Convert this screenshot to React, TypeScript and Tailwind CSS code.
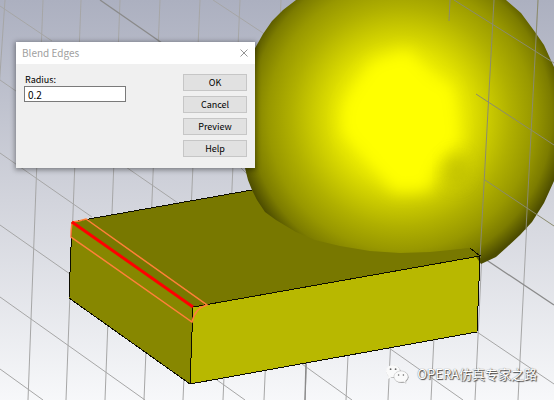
import { useState } from "react";

const verticalLines = [
  [5, -22],
  [43, 28],
  [81, 66],
  [120, 105],
  [160, 144],
  [200, 183],
  [240, 223],
  [281, 264],
  [322, 305],
  [364, 346],
  [407, 388],
  [450, 431],
  [494, 475],
  [538, 518],
];

const diagonalLines = [
  [0, 6, 52, 41],
  [0, 80, 178, 203],
  [0, 153, 92, 217],
  [0, 225, 70, 274],
  [0, 297, 145, 400],
  [0, 369, 43, 400],
  [213, 0, 266, 35],
  [230, 157, 250, 177],
  [217, 380, 245, 400],
  [302, 364, 352, 400],
  [389, 348, 463, 400],
  [477, 332, 554, 384],
];

// grid lines that run in front of the sphere
const frontLines = [
  [450, 0, 449, 21],
  [494, 0, 480, 258],
  [538, 0, 526, 230],
  [454, 0, 554, 63],
  [476, 94, 554, 145],
  [485, 180, 554, 226],
];

const spherePath =
  "M296 0 L283 10 L272 21 L263 34 L254 50 L246 75 L241 110 L242 150 L245 168 L248 180 L252 190 L257 200 L265 212 L276 220 L296 232 L315 240 L340 246 L370 251 L400 253 L430 252 L470 248 L481 264 L496 257 L506 248 L520 235 L532 222 L544 203 L554 181 L562 150 L562 100 L554 67 L544 45 L535 32 L521 13 L506 0 Z";

const Scene = () => (
  <svg
    className="absolute inset-0 h-full w-full"
    viewBox="0 0 554 400"
    preserveAspectRatio="xMidYMid slice"
    aria-hidden="true"
  >
    <defs>
      <radialGradient
        id="sphere"
        gradientUnits="userSpaceOnUse"
        cx="401"
        cy="117"
        r="166"
      >
        <stop offset="0" stopColor="#ffff00" />
        <stop offset="0.3" stopColor="#f2f200" />
        <stop offset="0.42" stopColor="#e0e000" />
        <stop offset="0.54" stopColor="#c8c800" />
        <stop offset="0.66" stopColor="#b0b000" />
        <stop offset="0.8" stopColor="#989800" />
        <stop offset="0.91" stopColor="#7c7c00" />
        <stop offset="1" stopColor="#4c4c00" />
      </radialGradient>
      <filter id="soft" x="-50%" y="-50%" width="200%" height="200%">
        <feGaussianBlur stdDeviation="8" />
      </filter>
      <clipPath id="sphereClip">
        <path d={spherePath} />
      </clipPath>
    </defs>

    <g stroke="#a6a6a6" strokeWidth="1">
      {verticalLines.map(([top, bottom]) => (
        <line key={top} x1={top} y1="0" x2={bottom} y2="400" />
      ))}
      {diagonalLines.map(([x1, y1, x2, y2]) => (
        <line key={`${x1}-${y1}`} x1={x1} y1={y1} x2={x2} y2={y2} />
      ))}
    </g>
    <g stroke="#8a8a8a" strokeWidth="1.3">
      <line x1="100" y1="0" x2="162" y2="43" />
      <line x1="479" y1="255" x2="554" y2="305" />
      <line x1="306" y1="360" x2="305" y2="400" />
    </g>

    <polygon points="72,222 252,190 380,200 470,248 480,256 193,307" fill="#787800" />
    <polygon points="72,222 193,307 190,384 69,298" fill="#878700" />
    <polygon points="193,307 480,256 477,332 190,384" fill="#b8b800" />

    <path d={spherePath} fill="url(#sphere)" />
    <g clipPath="url(#sphereClip)">
      <polygon
        points="372,62 408,50 432,78 452,86 460,142 436,162 430,190 394,192 362,152 342,132 344,104"
        fill="#ffff00"
        filter="url(#soft)"
      />
      {/* darker facet at the lower right of the highlight */}
      <ellipse
        cx="456"
        cy="170"
        rx="12"
        ry="16"
        fill="#b8b800"
        opacity="0.6"
        filter="url(#soft)"
      />
    </g>
    {/* the box corner covers the bottom of the sphere */}
    <polygon points="440,252 470,248 480,256 440,263" fill="#787800" />

    <g stroke="#8b8b6e" strokeWidth="1">
      {frontLines.map(([x1, y1, x2, y2]) => (
        <line key={`${x1}-${y1}`} x1={x1} y1={y1} x2={x2} y2={y2} />
      ))}
    </g>

    <g
      fill="none"
      stroke="#0c0c00"
      strokeWidth="1"
      shapeRendering="crispEdges"
    >
      <path d="M252 190 L72 222 L69 298 L190 384 L477 332 L480 256 L193 307 L190 384" />
      <path d="M470 248 L480 256" />
    </g>
    <path
      d="M72 222 L79 221 L86 219 L207 305 Q195 308 192 322 L71 237 Q71 230 72 222"
      fill="none"
      stroke="#ff8038"
      strokeWidth="1.5"
    />
    <line x1="72" y1="222" x2="193" y2="307" stroke="#ff0000" strokeWidth="3" />
  </svg>
);

const WechatIcon = () => (
  <svg className="h-5 w-6 shrink-0" viewBox="0 0 24 20" aria-hidden="true">
    <g fill="#8a8a8a">
      <ellipse cx="8.5" cy="7.8" rx="7" ry="6.2" />
      <ellipse cx="16.5" cy="13.2" rx="7" ry="5.8" />
    </g>
    <g fill="#fafafa">
      <ellipse cx="8" cy="7.2" rx="7" ry="6.2" />
      <path d="M3.4 11 L2.8 15 L7 13 Z" />
    </g>
    <g fill="#fafafa" stroke="#b4b4b4" strokeWidth="0.5">
      <path d="M16 7 C12 7 9 9.500 9 12.700 C9 16 12 18.300 16 18.300 L18.500 17.900 L21 19.300 L20.600 16.900 C22.200 15.900 23 14.400 23 12.700 C23 9.500 20 7 16 7 Z" />
    </g>
    <g fill="#666666">
      <circle cx="5.600" cy="5.200" r="0.900" />
      <circle cx="10.600" cy="5.200" r="0.900" />
      <circle cx="13.600" cy="11" r="0.800" />
      <circle cx="18.400" cy="11" r="0.800" />
    </g>
  </svg>
);

const buttons = ["OK", "Cancel", "Preview", "Help"];

const BlendEdgesDialog = () => {
  const [radius, setRadius] = useState("0.2");

  return (
    <section
      role="dialog"
      aria-labelledby="dialog-title"
      className="absolute left-4 top-[42px] w-[239px] bg-[#f0f0f0] text-[9px] leading-3 text-black shadow-[0_1px_5px_1px_rgba(0,0,0,0.4)]"
    >
      <header className="flex h-[22px] items-center justify-between bg-white px-1.5">
        <h1 id="dialog-title" className="text-[10px] text-[#a0a0a0]">
          Blend Edges
        </h1>
        <button type="button" aria-label="Close" className="p-px">
          <svg
            className="h-2 w-2"
            viewBox="0 0 8 8"
            stroke="#888888"
            strokeWidth="0.9"
          >
            <path d="M0.500 0.500 L7.500 7.500 M7.500 0.500 L0.500 7.500" />
          </svg>
        </button>
      </header>

      <div className="flex items-start justify-between px-2 pb-[11px] pt-2.5">
        <div className="flex flex-col">
          <label htmlFor="radius" className="pl-px">
            Radius:
          </label>
          <input
            id="radius"
            type="text"
            value={radius}
            onChange={(e) => setRadius(e.target.value)}
            className="h-4 w-[102px] border border-[#7a7a7a] bg-white px-[3px] text-[10px] outline-none"
          />
        </div>

        <div className="flex w-16 flex-col gap-[5px]">
          {buttons.map((name) => (
            <button
              key={name}
              type="button"
              className="flex h-[17px] items-center justify-center border border-[#c6c6c6] bg-[#e1e1e1]"
            >
              {name}
            </button>
          ))}
        </div>
      </div>
    </section>
  );
};

export default function App() {
  return (
    <main className="relative min-h-screen overflow-hidden bg-linear-to-b from-[#acb0c0] via-[#d2d4dc] to-[#f7f8fa] font-['Noto_Sans_CJK_SC','Noto_Sans',sans-serif]">
      <Scene />
      <BlendEdgesDialog />
      <div className="absolute bottom-4 right-4 flex items-center gap-2">
        <WechatIcon />
        <span className="pr-px text-[13px] leading-5 text-white [text-shadow:1px_1px_1px_#444444,0_0_1px_#555555]">
          OPERA仿真专家之路
        </span>
      </div>
    </main>
  );
}
